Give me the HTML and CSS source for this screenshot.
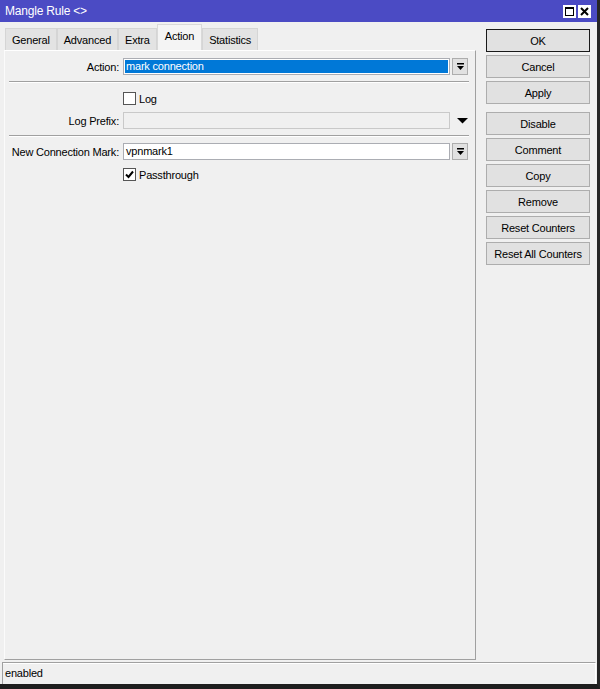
FILE: index.html
```html
<!DOCTYPE html>
<html>
<head>
    <meta charset="utf-8">
    <title>Mangle Rule &lt;&gt;</title>
    <link rel="stylesheet" href="styles.css">
</head>
<body>
<div class="window">
    <div class="titlebar">
        <span class="title">Mangle Rule &lt;&gt;</span>
        <div class="title-btns">
            <svg class="tbtn" width="13" height="13" viewBox="0 0 13 13">
                <rect x="0" y="0" width="13" height="13" fill="#fff"/>
                <rect x="2.5" y="2.5" width="8" height="8" fill="none" stroke="#000"/>
                <rect x="2" y="2" width="9" height="2" fill="#000"/>
            </svg>
            <svg class="tbtn" width="13" height="13" viewBox="0 0 13 13">
                <rect x="0" y="0" width="13" height="13" fill="#fff"/>
                <path d="M3 3 L10 10 M10 3 L3 10" stroke="#000" stroke-width="2"/>
            </svg>
        </div>
    </div>

    <div class="main">
        <div class="left">
            <div class="tabs">
                <div class="tab">General</div>
                <div class="tab">Advanced</div>
                <div class="tab">Extra</div>
                <div class="tab active">Action</div>
                <div class="tab">Statistics</div>
            </div>
            <div class="panel">
                <div class="row first">
                    <label class="label">Action:</label>
                    <div class="field selected">mark connection</div>
                    <div class="drop">
                        <svg width="7" height="8" viewBox="0 0 7 8"><rect x="0" y="0" width="7" height="1.5" fill="#000"/><path d="M0 3 L7 3 L3.5 7 Z" fill="#000"/></svg>
                    </div>
                </div>
                <div class="sep"></div>
                <div class="row check-row log-row">
                    <span class="label"></span>
                    <span class="checkbox"></span>
                    <span class="check-text">Log</span>
                </div>
                <div class="row prefix-row">
                    <label class="label">Log Prefix:</label>
                    <div class="field disabled"></div>
                    <div class="arrow">
                        <svg width="11" height="6" viewBox="0 0 11 6"><path d="M0 0 L11 0 L5.5 5.5 Z" fill="#000"/></svg>
                    </div>
                </div>
                <div class="sep"></div>
                <div class="row mark-row">
                    <label class="label">New Connection Mark:</label>
                    <div class="field">vpnmark1</div>
                    <div class="drop">
                        <svg width="7" height="8" viewBox="0 0 7 8"><rect x="0" y="0" width="7" height="1.5" fill="#000"/><path d="M0 3 L7 3 L3.5 7 Z" fill="#000"/></svg>
                    </div>
                </div>
                <div class="row check-row pass-row">
                    <span class="label"></span>
                    <span class="checkbox">
                        <svg width="11" height="11" viewBox="0 0 11 11"><path d="M2 5.5 L4.5 8 L9 2.5" fill="none" stroke="#000" stroke-width="2"/></svg>
                    </span>
                    <span class="check-text">Passthrough</span>
                </div>
            </div>
        </div>

        <div class="side">
            <button class="btn default">OK</button>
            <button class="btn">Cancel</button>
            <button class="btn">Apply</button>
            <button class="btn group">Disable</button>
            <button class="btn">Comment</button>
            <button class="btn">Copy</button>
            <button class="btn">Remove</button>
            <button class="btn">Reset Counters</button>
            <button class="btn">Reset All Counters</button>
        </div>
    </div>

    <div class="statusbar">enabled</div>
</div>
</body>
</html>
```

FILE: styles.css
```css
* {
    box-sizing: border-box;
}
body {
    margin: 0;
    background: #1e1e1e;
    font-family: "Liberation Sans", Arial, sans-serif;
    font-size: 11px;
    letter-spacing: -0.2px;
    color: #000;
}
.window {
    width: 600px;
    height: 689px;
    display: flex;
    flex-direction: column;
    background: #f0f0f0;
    border-right: 3px solid #262626;
    border-bottom: 5px solid #1e1e1e;
}
.titlebar {
    height: 22px;
    display: flex;
    align-items: center;
    justify-content: space-between;
    padding: 0 6px 0 5px;
    background: #4b4bc4;
    color: #fff;
    font-size: 12px;
}
.title-btns {
    display: flex;
    gap: 2px;
    margin-top: 1px;
}
.tbtn {
    display: block;
}
.main {
    flex: 1;
    display: flex;
    padding: 2px 0 0 4px;
}
.left {
    width: 472px;
    display: flex;
    flex-direction: column;
    padding-bottom: 2px;
}
.tabs {
    height: 26px;
    display: flex;
    align-items: flex-end;
    padding-left: 1px;
}
.tab {
    height: 22px;
    padding: 5px 6px 0;
    background: #e3e3e3;
    border: 1px solid #d5d5d5;
    border-bottom: none;
}
.tab.active {
    height: 26px;
    background: #f4f4f4;
    border-color: #d9d9d9;
    padding: 5px 7px 0;
}
.panel {
    flex: 1;
    border: 1px solid;
    border-color: #fff #a0a0a0 #a0a0a0 #fbfbfb;
    padding-top: 7px;
}
.row {
    display: flex;
    align-items: center;
    height: 17px;
}
.label {
    width: 114px;
    margin-right: 4px;
    text-align: right;
}
.field {
    width: 327px;
    height: 17px;
    padding: 0 2px;
    line-height: 15px;
    background: #fff;
    border: 1px solid #abadb3;
    white-space: nowrap;
}
.field.selected {
    background: #0078d7;
    color: #fff;
    box-shadow: inset 0 0 0 1px #fff;
}
.field.disabled {
    background: #f0f0f0;
    border-color: #c9c9c9;
}
.drop {
    width: 16px;
    height: 17px;
    margin-left: 2px;
    display: flex;
    align-items: center;
    justify-content: center;
    background: #e1e1e1;
    border: 1px solid #adadad;
}
.arrow {
    width: 16px;
    margin-left: 4px;
    display: flex;
    align-items: center;
    justify-content: center;
}
.sep {
    margin: 6px 6px 0 4px;
    border-top: 1px solid #a0a0a0;
    border-bottom: 1px solid #fff;
}
.check-row {
    height: 13px;
}
.log-row {
    margin-top: 9px;
}
.prefix-row {
    margin-top: 7px;
}
.mark-row {
    margin-top: 6px;
}
.pass-row {
    margin-top: 8px;
}
.checkbox {
    width: 13px;
    height: 13px;
    display: flex;
    align-items: center;
    justify-content: center;
    background: #fff;
    border: 1px solid #555;
}
.check-text {
    margin-left: 3px;
}
.side {
    width: 104px;
    margin-left: 10px;
    padding-top: 5px;
    display: flex;
    flex-direction: column;
    gap: 3px;
}
.btn {
    height: 23px;
    padding: 0;
    font-family: inherit;
    font-size: 11px;
    letter-spacing: -0.2px;
    color: #000;
    background: #e1e1e1;
    border: 1px solid #adadad;
}
.btn.default {
    border-color: #1a1a1a;
}
.btn.group {
    margin-top: 5px;
}
.statusbar {
    height: 22px;
    margin: 0 1px 0 2px;
    padding-left: 2px;
    line-height: 21px;
    border-top: 1px solid #a0a0a0;
    border-left: 1px solid #a0a0a0;
    border-right: 1px solid #fff;
    box-shadow: inset 0 1px 0 #fff;
}
```
